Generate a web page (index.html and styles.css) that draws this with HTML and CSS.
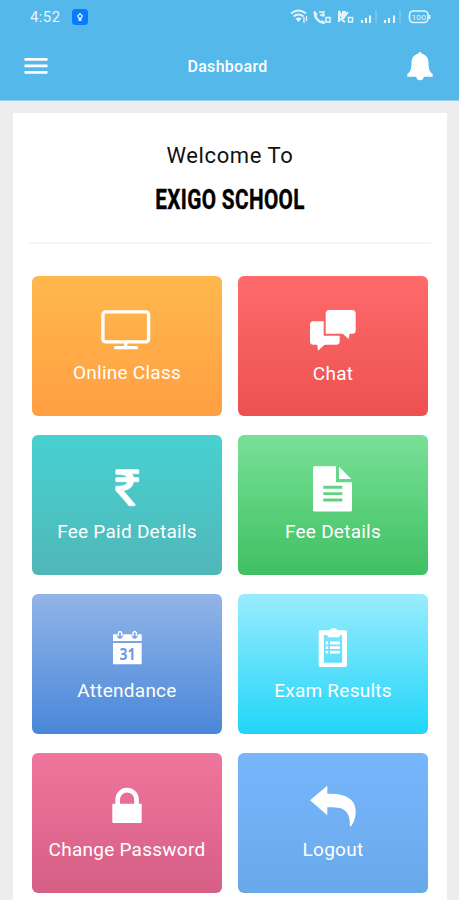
FILE: index.html
```html
<!DOCTYPE html>
<html lang="en">
<head>
<meta charset="utf-8">
<title>Dashboard</title>
<link rel="stylesheet" href="styles.css">
</head>
<body>
<header class="header">
  <div class="status">
    <span class="time">4:52</span>
    <svg class="badge" width="16" height="16" viewBox="0 0 16 16"><rect width="16" height="16" rx="3.500" fill="#087aff"/><path d="M8 3.800 11.200 7 9.500 9.500V12h-3V9.500L4.800 7z" fill="#d9ecff"/><circle cx="8" cy="7.300" r="1.200" fill="#087aff"/></svg>
    <svg class="signals" width="142" height="18" viewBox="289 8 142 18" fill="none" stroke="#e4f5fc" stroke-width="1.700">
      <path d="M291 13.500q7.500-6 15 0M293.500 16.500q5-4 10 0"/><path d="M295.500 18.500q3-2 6 0L298.500 22z" fill="#e4f5fc" stroke="none"/><path d="M304 17v6M306.500 16v5" stroke-width="1.300"/>
      <path d="M315 11.500c-1 5 3 11 9 11.500M314 12l3 3M321 21l4 2" stroke-width="2.300"/><path d="M319 12h6M320 15h5M323 12v5" stroke-width="1.400"/><rect x="326" y="17.500" width="4" height="4.500" stroke-width="1.500"/>
      <path d="M339 22V11l4 8v-8M345 11v5l3-4M339 18l6 4" stroke-width="2"/><rect x="348.500" y="17.500" width="4" height="4.500" stroke-width="1.500"/>
      <path d="M362 20v3M366 18v5M370 15.500v7.500M385 20v3M389 18v5M394 15.500v7.500" stroke-width="2.100"/><path d="M376 10v13M400 10v13" stroke-width="1.500" opacity=".28"/>
      <rect x="409.500" y="11" width="18.500" height="11.500" rx="4" stroke-width="1.600"/><path d="M429.700 15v4" stroke-width="1.500"/><text x="411.500" y="20" textLength="14.500" lengthAdjust="spacingAndGlyphs" class="battery">100</text>
    </svg>
  </div>
  <div class="bar">
    <svg width="24" height="18" viewBox="0 0 24 18"><path d="M.5 2.300h23M.5 8.800h23M.5 15.300h23" stroke="#fff" stroke-width="2.700"/></svg>
    <h1 class="title">Dashboard</h1>
    <svg width="26" height="29" viewBox="0 0 26 29" fill="#fff"><path d="M11.200 1.800q0-1.800 1.800-1.800t1.800 1.800C20 3 21.500 7 21.500 11c0 6 1 9 4.200 11.200v2.600H16.800q-.6 3.500-3.800 3.500t-3.800-3.500H.3v-2.600C3.500 20 4.500 17 4.500 11c0-4 1.500-8 6.700-9.200z"/></svg>
  </div>
</header>
<main class="card">
  <div class="intro">
    <p class="welcome">Welcome To</p>
    <h2 class="school">EXIGO SCHOOL</h2>
  </div>
  <nav class="grid">
    <a class="tile online">
      <svg class="icon" viewBox="55 0 80 80"><rect x="70.900" y="35.900" width="45.700" height="30" rx="3" fill="none" stroke="#fff" stroke-width="3.400"/><path d="M93.700 67v5M83.500 71.700h21" stroke="#fff" stroke-width="3.300" stroke-linecap="round"/></svg>
      <span class="label">Online Class</span>
    </a>
    <a class="tile chat">
      <svg class="icon" viewBox="55 0 80 80" fill="#fff"><path d="M91.200 34h23q3.500 0 3.500 3.500v16.700q0 3.500-3.500 3.500h-2.700l-.8 5.300-6-5.300H87.700V37.500q0-3.500 3.500-3.500z"/><path d="M75.500 45.300h10.200v14.400h16V65.200q0 3.500-3.500 3.500H86.500l-6.500 6-.8-6h-3.700q-3.500 0-3.500-3.500V48.800q0-3.500 3.500-3.500z"/></svg>
      <span class="label">Chat</span>
    </a>
    <a class="tile paid">
      <svg class="icon" viewBox="55 0 80 80" fill="#fff"><path transform="translate(83.700 31.200) scale(.0258)" stroke="#fff" stroke-width="24" d="M898 470v102q0 14-9 23t-23 9h-168q-23 144-129 234t-276 110q167 178 459 536 14 16 4 34-8 18-29 18h-195q-16 0-25-12-306-367-498-571-9-9-9-22v-127q0-13 9.500-22.500t22.500-9.500h112q132 0 212.500-43t102.500-125h-427q-14 0-23-9t-9-23v-102q0-14 9-23t23-9h413q-57-113-268-113h-145q-13 0-22.500-9.500t-9.500-22.500v-133q0-14 9-23t23-9h832q14 0 23 9t9 23v102q0 14-9 23t-23 9h-233q47 61 64 144h171q14 0 23 9t9 23z"/></svg>
      <span class="label">Fee Paid Details</span>
    </a>
    <a class="tile fee">
      <svg class="icon" viewBox="55 0 80 80" fill="#fff"><path fill-rule="evenodd" d="M76.500 31.200H98v16h16v27.800q0 1.500-1.500 1.500h-36q-1.500 0-1.500-1.500V32.700q0-1.500 1.500-1.500zM85.300 50.800v2.900h19v-2.900zM85.300 57.200v2.900h19v-2.900zM85.300 63.600v2.900h19v-2.900z"/><path d="M101 31.800v12.200h12.200z"/></svg>
      <span class="label">Fee Details</span>
    </a>
    <a class="tile attendance">
      <svg class="icon" viewBox="55 0 80 80" fill="#fff"><path d="M81 40.300h3.800q.5 4.500 3.200 4.500t3.200-4.500h8.300q.5 4.500 3.200 4.500t3.200-4.500h3.800V47H81zM81 49h28.700v21.300H81z"/><path d="M86.300 42v-3q1.700-2.800 3.400 0v3M101 42v-3q1.700-2.800 3.400 0v3" fill="none" stroke="#fff" stroke-width="1.500"/><text class="day" x="87.500" y="65.700" textLength="16" lengthAdjust="spacingAndGlyphs">31</text></svg>
      <span class="label">Attendance</span>
    </a>
    <a class="tile exam">
      <svg class="icon" viewBox="55 0 80 80" fill="#fff"><path fill-rule="evenodd" d="M82.500 36.300h24.700q1.800 0 1.800 1.800v33.100q0 1.800-1.800 1.800H82.500q-1.800 0-1.800-1.800V38.100q0-1.800 1.800-1.800zM85.900 41v27.800h18.200V41z"/><path d="M87.300 38.500q0-2 2.200-2h2.200q.6-2.200 4-2.200t4 2.200h2.200q2.200 0 2.200 2L101 43.200H90.400z"/><path d="M92 49h9.800M92 53.600h9.800M92 58.200h9.800M87.800 49h2.400M87.800 53.600h2.400M87.800 58.200h2.400" stroke="#fff" stroke-width="2.800"/></svg>
      <span class="label">Exam Results</span>
    </a>
    <a class="tile password">
      <svg class="icon" viewBox="55 0 80 80"><path d="M85.700 52v-5.500a9.400 9.400 0 0 1 18.800 0V52" fill="none" stroke="#fff" stroke-width="4.700"/><rect x="80.300" y="50.700" width="29.400" height="19.300" rx="1" fill="#fff"/></svg>
      <span class="label">Change Password</span>
    </a>
    <a class="tile logout">
      <svg class="icon" viewBox="55 0 80 80" fill="#fff"><path d="M72 47.300 89.300 32.700v8C107 40.200 117.700 45.500 117.700 58.500c0 6-1.700 10.500-4.500 14.700h-1.300C112.300 61 108.500 54.600 95 54.300h-5.700v8z"/></svg>
      <span class="label">Logout</span>
    </a>
  </nav>
</main>
</body>
</html>
```
FILE: styles.css
```css
* { box-sizing: border-box; }
body {
  margin: 0;
  height: 900px;
  overflow: hidden;
  background: #ededed;
  font-family: Roboto, "Liberation Sans", sans-serif;
}
.header {
  height: 101px;
  background: #54b9ea;
  color: #fff;
  border-bottom: 1px solid #9dd5f0;
}
.status {
  display: flex;
  align-items: center;
  height: 34px;
  padding: 0 28px 0 30px;
}
.time { font-size: 15px; letter-spacing: 0.4px; color: #e6f6fd; width: 42px; }
.signals { margin-left: auto; }
.battery { font-size: 8px; fill: #e4f5fc; stroke: none; }
.bar {
  display: flex;
  align-items: center;
  justify-content: space-between;
  height: 64px;
  padding: 0 26px 0 24px;
}
.title { margin: 0; font-size: 16px; font-weight: 500; letter-spacing: 0.3px; }
.card {
  height: 800px;
  margin: 12px 12px 0 13px;
  padding: 0 16px;
  background: #fff;
}
.intro {
  height: 131px;
  padding-top: 28px;
  border-bottom: 2px solid #f5f5f5;
  text-align: center;
  color: #111;
}
.welcome { margin: 0; line-height: 30px; font-size: 22px; letter-spacing: 0.6px; }
.school {
  margin: 13px -20px 0;
  line-height: 32px;
  font-size: 28px;
  font-weight: 700;
  letter-spacing: 0.5px;
  color: #000;
  -webkit-text-stroke: 0.4px #000;
  transform: scaleX(0.74);
}
.grid {
  display: grid;
  grid-template-columns: 190px 190px;
  grid-auto-rows: 140px;
  gap: 19.200px 16px;
  padding: 31.500px 3px 0;
}
.tile {
  display: flex;
  flex-direction: column;
  align-items: center;
  border-radius: 6px;
  color: #fff;
}
.icon { flex: none; width: 80px; height: 80px; }
.label { line-height: 34px; font-size: 19px; letter-spacing: 0.25px; white-space: nowrap; }
.chat .label { line-height: 36px; }
.day { font: 700 16px "Open Sans", sans-serif; fill: #6f99df; }
.online { background: linear-gradient(#ffb84d, #ff9f43); }
.chat { background: linear-gradient(#ff6b6b, #ec5150); }
.paid { background: linear-gradient(#48d1d1, #50b7b9); }
.fee { background: linear-gradient(#78e098, #40c062); }
.attendance { background: linear-gradient(#92b4e8, #4a87d9); }
.exam { background: linear-gradient(#9aecfd, #20d5f9); }
.password { background: linear-gradient(#f0759d, #d65f86); }
.logout { background: linear-gradient(#78b6fc, #68a9ea); }
```
